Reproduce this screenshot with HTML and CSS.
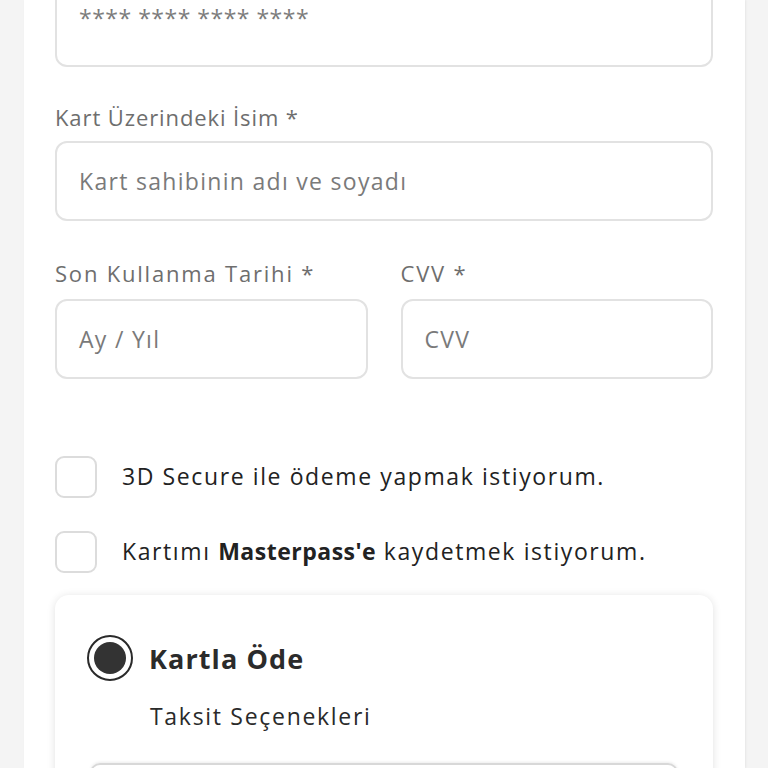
FILE: index.html
```html
<!DOCTYPE html>
<html lang="tr">
<head>
<meta charset="utf-8">
<link rel="stylesheet" href="styles.css">
</head>
<body>
<div class="panel">
  <div class="input input-card"><span class="ph stars">**** **** **** ****</span></div>

  <div class="label label-name">Kart Üzerindeki İsim *</div>
  <div class="input"><span class="ph">Kart sahibinin adı ve soyadı</span></div>

  <div class="row">
    <div class="col">
      <div class="label label-row">Son Kullanma Tarihi *</div>
      <div class="input"><span class="ph">Ay / Yıl</span></div>
    </div>
    <div class="col">
      <div class="label label-row">CVV *</div>
      <div class="input"><span class="ph">CVV</span></div>
    </div>
  </div>

  <div class="check check-first">
    <span class="box"></span>
    <span class="check-text">3D Secure ile ödeme yapmak istiyorum.</span>
  </div>
  <div class="check check-second">
    <span class="box"></span>
    <span class="check-text">Kartımı <b>Masterpass'e</b> kaydetmek istiyorum.</span>
  </div>

  <div class="card">
    <div class="radio-row">
      <span class="radio"><span class="dot"></span></span>
      <span class="radio-title">Kartla Öde</span>
    </div>
    <div class="sub">Taksit Seçenekleri</div>
    <div class="select"></div>
  </div>
</div>
</body>
</html>
```

FILE: styles.css
```css
html, body {
  margin: 0;
  padding: 0;
}
body {
  background: #f4f4f4;
  font-family: "Open Sans", Lato, sans-serif;
  overflow: hidden;
  height: 768px;
}
.panel {
  margin: 0 23px 0 24px;
  background: #ffffff;
  padding: 0 32px 0 31px;
  height: 768px;
  box-shadow: 1px 0 2px rgba(0,0,0,0.06);
  overflow: hidden;
}
.input {
  box-sizing: border-box;
  height: 80px;
  border: 2px solid #e2e2e2;
  border-radius: 12px;
  display: flex;
  align-items: center;
  padding-left: 22px;
  background: #fff;
}
.input-card {
  margin-top: -13px;
  align-items: flex-start;
  padding-top: 14px;
}
.ph {
  color: #7a7a7a;
  font-size: 23px;
  letter-spacing: 1.3px;
}
.stars {
  font-size: 23px;
  line-height: 30px;
  letter-spacing: 0.5px;
  color: #7c7c7c;
}
.label {
  color: #6e6e6e;
  font-size: 22px;
  line-height: 30px;
  letter-spacing: 0.9px;
}
.label-name {
  margin-top: 35px;
  margin-bottom: 9px;
}
.row {
  display: flex;
  gap: 33px;
  margin-top: 37px;
}
.col {
  flex: 1;
}
.label-row {
  margin-bottom: 11px;
  letter-spacing: 1.8px;
}
.check {
  display: flex;
  align-items: center;
  gap: 25px;
}
.check-first {
  margin-top: 77px;
}
.check-second {
  margin-top: 33px;
}
.box {
  box-sizing: border-box;
  width: 42px;
  height: 42px;
  border: 2px solid #dcdcdc;
  border-radius: 9px;
  flex: none;
}
.check-text {
  font-size: 23px;
  line-height: 30px;
  letter-spacing: 1.6px;
  color: #222;
  margin-top: -3px;
}
.check-text b {
  font-weight: 700;
  letter-spacing: 0.5px;
}
.card {
  margin-top: 22px;
  border-radius: 14px;
  box-shadow: 0 1px 8px rgba(0,0,0,0.12);
  padding: 40px 35px 0 32px;
  height: 300px;
  background: #fff;
}
.radio-row {
  display: flex;
  align-items: center;
  gap: 16px;
}
.radio {
  box-sizing: border-box;
  width: 46px;
  height: 46px;
  border: 2.5px solid #2a2a2a;
  border-radius: 50%;
  display: flex;
  align-items: center;
  justify-content: center;
  flex: none;
}
.dot {
  width: 32px;
  height: 32px;
  border-radius: 50%;
  background: #333;
}
.radio-title {
  font-size: 27px;
  font-weight: 700;
  letter-spacing: 1.1px;
  color: #2b2b2b;
}
.sub {
  margin-top: 20px;
  margin-left: 63px;
  font-size: 23px;
  line-height: 30px;
  letter-spacing: 1.7px;
  color: #2a2a2a;
}
.select {
  margin-top: 32px;
  margin-left: 3px;
  height: 60px;
  border: 2px solid #d8d8d8;
  border-radius: 10px;
  box-shadow: 0 -1px 3px rgba(0,0,0,0.08);
}
```
